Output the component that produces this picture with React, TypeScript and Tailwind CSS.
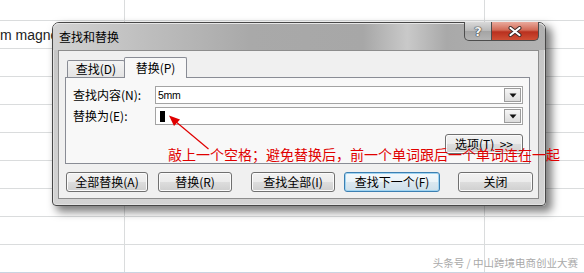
import React from "react";

const GRID = "border-[#dadcdd]";

function GridRow({ h, last, children }: { h: string; last?: boolean; children?: React.ReactNode }) {
  return (
    <div className={`flex ${h} border-b ${last ? "border-[#c9d4e1]" : GRID}`}>
      <div className={`w-[125px] border-r ${GRID} flex items-center overflow-visible whitespace-nowrap`}>{children}</div>
      <div className={`w-[360px] border-r ${GRID}`} />
      <div className="flex-1" />
    </div>
  );
}

function WinButton({ children, w, focused, className = "" }: { children: React.ReactNode; w: string; focused?: boolean; className?: string }) {
  return (
    <div
      className={`${w} h-[20px] flex items-center justify-center rounded-[3px] border text-[12px] leading-[14px] text-black ${
        focused
          ? "border-[#3c7fb1] shadow-[inset_0_0_0_1px_#9fd4f2] bg-[linear-gradient(#f4f9fc,#eaf3f8_50%,#dbe8f0_51%,#cddfea)]"
          : "border-[#707070] shadow-[inset_0_0_0_1px_#fbfbfb] bg-[linear-gradient(#f2f2f2,#ebebeb_50%,#dddddd_51%,#cfcfcf)]"
      } ${className}`}
    >
      {children}
    </div>
  );
}

function DropButton() {
  return (
    <div className="w-[17px] h-[14px] mr-[1px] border border-[#9c9c9c] bg-[linear-gradient(#f6f6f6,#dcdcdc)] flex items-center justify-center">
      <svg width="8" height="5" viewBox="0 0 8 5">
        <polygon points="0.5,0.5 7.5,0.5 4,4.5" fill="#111" />
      </svg>
    </div>
  );
}

export default function App() {
  return (
    <div className="relative w-[584px] h-[273px] overflow-hidden bg-white font-['Noto_Sans_CJK_SC',sans-serif]">
      {/* spreadsheet background */}
      <div className="flex flex-col">
        <GridRow h="h-[21px]" />
        <GridRow h="h-[28px]">
          <span className="font-['Liberation_Sans',sans-serif] text-[14px] text-[#222] leading-[16px]">m magnet</span>
        </GridRow>
        <GridRow h="h-[28px]" />
        <GridRow h="h-[28px]" />
        <GridRow h="h-[28px]" />
        <GridRow h="h-[28px]" />
        <GridRow h="h-[28px]" />
        <GridRow h="h-[28px]" />
        <GridRow h="h-[28px]" />
        <GridRow h="h-[28px]" last />
      </div>

      {/* dialog window */}
      <div className="absolute left-[52px] top-[22px] w-[494px] h-[184px] flex flex-col rounded-t-[7px] rounded-b-[4px] border border-[#474747] bg-[linear-gradient(#c4c4c4,#cfcfcf_70%,#d3d3d3)] shadow-[inset_0_0_0_1px_#e2e2e2,5px_5px_9px_1px_rgba(0,0,0,0.5)]">
        {/* title bar */}
        <div className="h-[27px] rounded-t-[6px] flex items-center pl-[6px] bg-[linear-gradient(90deg,#d2d2d2_0%,#bdbdbd_20%,#a9a9a9_40%,#a7a7a7_63%,#c9c9c9_72%,#a9a9a9_80%,#b2b2b2_100%)] shadow-[inset_0_1px_0_#e6e6e6]">
          <span className="text-[12px] leading-[14px] text-black">查找和替换</span>
        </div>

        {/* caption buttons */}
        <div className="absolute right-[6px] top-[-1px] flex h-[19px]">
          <div className="w-[28px] h-full border border-[#4d4d4d] border-t-0 rounded-bl-[5px] bg-[linear-gradient(#d9d9d9,#b8b8b8_50%,#a4a4a4_51%,#b4b4b4)] flex items-center justify-center">
            <span className="font-['DejaVu_Sans',sans-serif] font-bold text-[13px] leading-[13px] text-[#f4f4f4] [text-shadow:0_0_1px_#333,0_0_1px_#333,0_0_1px_#333]">?</span>
          </div>
          <div className="w-[47px] h-full border border-[#4d4d4d] border-t-0 border-l-0 rounded-br-[5px] bg-[linear-gradient(#e9aa9c,#d26a56_45%,#b9301f_55%,#cf4e34)] flex items-center justify-center">
            <svg width="14" height="11" viewBox="0 0 14 11">
              <path d="M2.5 2 L11.5 9 M11.5 2 L2.5 9" stroke="#3a2a28" strokeWidth="4" strokeLinecap="round" />
              <path d="M2.5 2 L11.5 9 M11.5 2 L2.5 9" stroke="#ffffff" strokeWidth="2.2" strokeLinecap="round" />
            </svg>
          </div>
        </div>

        {/* client area */}
        <div className="flex-1 ml-[5px] mr-[6px] mb-[6px] border border-[#8d8d8d] bg-[#f0f0f0] pt-[6px] flex flex-col">
          {/* tabs */}
          <div className="flex items-end h-[20px] pl-[8px] relative z-10">
            <div className="w-[58px] h-[17px] border border-b-0 border-[#898c95] rounded-t-[2px] bg-[linear-gradient(#f3f3f3,#e4e4e4)] flex items-center justify-center text-[12px] leading-[14px] text-black">
              查找(D)
            </div>
            <div className="w-[63px] h-[21px] -ml-px -mb-px border border-b-0 border-[#898c95] rounded-t-[2px] bg-[#f8f8f8] flex items-center justify-center text-[12px] leading-[14px] text-black pb-[1px]">
              替换(P)
            </div>
          </div>
          {/* tab panel */}
          <div className="ml-[6px] mr-[8px] h-[87px] border border-[#898c95] bg-[#f8f8f8] pt-[8px] pl-[7px] pr-[6px] flex flex-col">
            <div className="flex h-[18px] items-center">
              <div className="w-[82px] text-[12px] leading-[14px] text-black whitespace-nowrap">查找内容(N):</div>
              <div className="flex-1 h-full border border-[#a3a3a3] bg-white flex items-center justify-between">
                <span className="pl-[2px] font-['Liberation_Sans',sans-serif] text-[10.5px] leading-[12px] text-black tracking-[-0.3px]">5mm</span>
                <DropButton />
              </div>
            </div>
            <div className="flex h-[18px] items-center mt-[3px]">
              <div className="w-[82px] text-[12px] leading-[14px] text-black whitespace-nowrap">替换为(E):</div>
              <div className="flex-1 h-full border border-[#a3a3a3] bg-white flex items-center justify-between">
                <div className="ml-[4px] w-[5px] h-[11px] bg-black" />
                <DropButton />
              </div>
            </div>
            <div className="flex justify-end mt-[9px]">
              <WinButton w="w-[78px]">
                <span className="whitespace-nowrap">选项(T)&nbsp;&nbsp;&gt;&gt;</span>
              </WinButton>
            </div>
          </div>
          {/* bottom buttons */}
          <div className="flex mt-[8px] pl-[7px]">
            <WinButton w="w-[82px]">全部替换(A)</WinButton>
            <WinButton w="w-[74px]" className="ml-[10px]">替换(R)</WinButton>
            <WinButton w="w-[84px]" className="ml-[19px]">查找全部(I)</WinButton>
            <WinButton w="w-[96px]" className="ml-[9px]" focused>查找下一个(F)</WinButton>
            <WinButton w="w-[75px]" className="ml-[18px]">关闭</WinButton>
          </div>
        </div>
      </div>

      {/* annotation arrow */}
      <svg className="absolute left-0 top-0 pointer-events-none" width="584" height="273" viewBox="0 0 584 273">
        <line x1="208.5" y1="149" x2="175" y2="121" stroke="#e00000" strokeWidth="1.2" />
        <polygon points="169,115.5 180,119.5 174,126" fill="#e00000" />
      </svg>

      {/* annotation text */}
      <div className="absolute left-[168px] top-[146px] whitespace-nowrap text-[14px] leading-[16px] text-[#e00000]">
        敲上一个空格；避免替换后，前一个单词跟后一个单词连在一起
      </div>

      {/* watermark */}
      <div className="absolute right-[6px] bottom-[4px] whitespace-nowrap text-[10.5px] leading-[12px] text-[#a9a9a9] [text-shadow:0_0_1px_#ffffff]">
        头条号 / 中山跨境电商创业大赛
      </div>
    </div>
  );
}
